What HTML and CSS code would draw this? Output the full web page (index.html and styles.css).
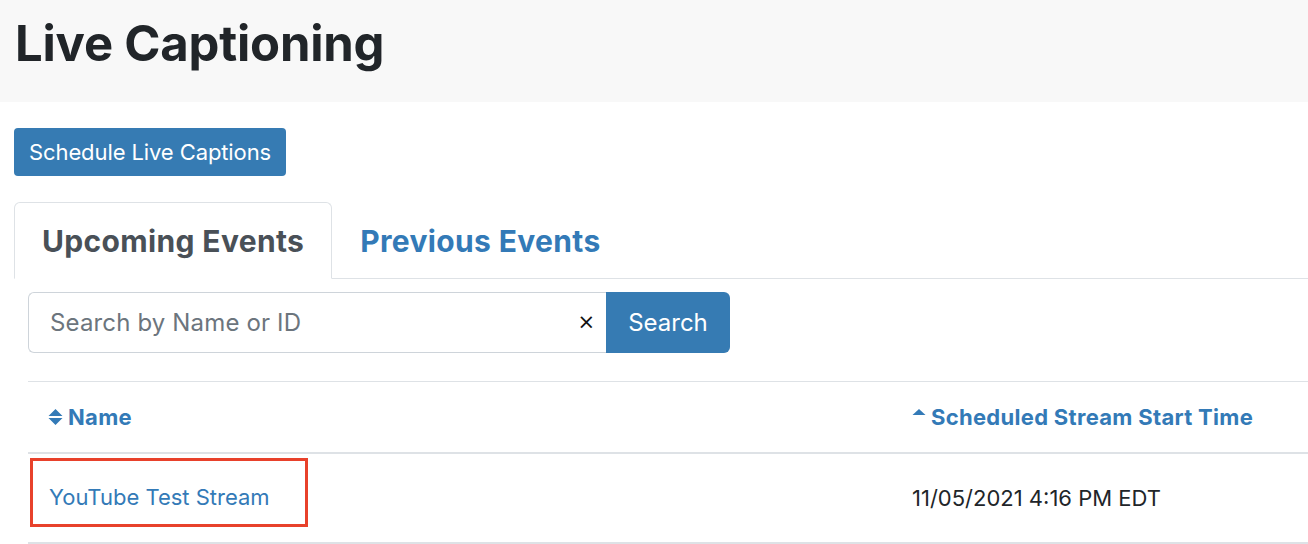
FILE: index.html
```html
<!DOCTYPE html>
<html lang="en">
<head>
<meta charset="utf-8">
<title>Live Captioning</title>
<link rel="stylesheet" href="styles.css">
</head>
<body>
<header class="page-header">
  <h1 class="page-title">Live Captioning</h1>
</header>
<main class="content">
  <button class="btn btn-schedule" type="button">Schedule Live Captions</button>
  <nav class="tabs">
    <a class="tab tab-active" href="#">Upcoming Events</a>
    <a class="tab" href="#">Previous Events</a>
  </nav>
  <section class="pane">
    <form class="search">
      <div class="search-field">
        <input class="search-input" type="text" placeholder="Search by Name or ID">
        <span class="search-clear">×</span>
      </div>
      <button class="btn btn-search" type="button">Search</button>
    </form>
    <table class="events">
      <thead>
        <tr>
          <th class="col-name">
            <a class="sort" href="#">
              <svg class="sort-icon" width="15" height="16" viewBox="0 0 15 16"><path d="M7.5 0 L14.5 7 L0.5 7 Z M0.5 9 L14.5 9 L7.5 16 Z" fill="currentColor"/></svg>
              Name
            </a>
          </th>
          <th class="col-time">
            <a class="sort" href="#">
              <svg class="sort-icon" width="14" height="16" viewBox="0 0 14 16"><path d="M7 0 L13.5 6 L0.5 6 Z" fill="currentColor"/></svg>
              Scheduled Stream Start Time
            </a>
          </th>
        </tr>
      </thead>
      <tbody>
        <tr>
          <td class="col-name"><span class="highlight"><a class="event-link" href="#">YouTube Test Stream</a></span></td>
          <td class="col-time">11/05/2021 4:16 PM EDT</td>
        </tr>
      </tbody>
    </table>
  </section>
</main>
</body>
</html>
```
FILE: styles.css
```css
* { box-sizing: border-box; }
html, body { margin: 0; padding: 0; }
body {
  font-family: Inter, "Helvetica Neue", Arial, sans-serif;
  color: #212529;
  background: #fff;
  overflow: hidden;
}
a { text-decoration: none; color: #337ab7; }

.page-header {
  background: #f8f8f8;
  height: 102px;
  padding: 14px 15px 0;
}
.page-title {
  margin: 0;
  font-size: 49px;
  line-height: 60px;
  font-weight: 700;
  color: #212529;
  letter-spacing: -0.2px;
}

.content {
  padding: 26px 0 0 14px;
}

.btn {
  font-family: inherit;
  border: 0;
  background: #367bb3;
  color: #fff;
  cursor: pointer;
}
.btn-schedule {
  display: block;
  height: 48px;
  padding: 0 15px;
  font-size: 22px;
  letter-spacing: -0.1px;
  border-radius: 4px;
}

.tabs {
  display: flex;
  margin-top: 26px;
  border-bottom: 1px solid #dee2e6;
}
.tab {
  display: block;
  height: 77px;
  padding: 0 27px;
  font-size: 30px;
  font-weight: 700;
  letter-spacing: 0.35px;
  line-height: 76px;
  border: 1px solid transparent;
  border-radius: 6px 6px 0 0;
  margin-bottom: -1px;
  color: #337ab7;
}
.tab-active {
  color: #495057;
  border-color: #dee2e6 #dee2e6 #fff;
  background: #fff;
}

.pane {
  padding: 13px 0 0 14px;
}

.search {
  display: flex;
  height: 61px;
}
.search-field {
  display: flex;
  align-items: center;
  width: 578px;
  border: 1px solid #ced4da;
  border-right: 0;
  border-radius: 6px 0 0 6px;
  padding: 0 11px 0 21px;
}
.search-input {
  flex: 1;
  border: 0;
  outline: none;
  padding: 0;
  font-family: inherit;
  font-size: 24px;
  letter-spacing: 0.15px;
  color: #495057;
  background: transparent;
}
.search-input::placeholder { color: #6c757d; }
.search-clear {
  font-size: 21px;
  line-height: 1;
  color: #111;
  font-family: "DejaVu Sans", sans-serif;
}
.btn-search {
  width: 124px;
  height: 61px;
  font-size: 24px;
  border-radius: 0 6px 6px 0;
}

.events {
  margin-top: 28px;
  width: 100%;
  border-collapse: collapse;
  font-size: 22px;
}
.events th, .events td {
  text-align: left;
  vertical-align: middle;
}
.events th {
  border-top: 1px solid #dee2e6;
  border-bottom: 2px solid #dee2e6;
  height: 71px;
  padding: 0 20px;
  font-weight: 700;
  letter-spacing: 0.3px;
  white-space: nowrap;
}
.events td {
  border-bottom: 2px solid #dee2e6;
  height: 90px;
  padding: 0 20px;
  white-space: nowrap;
}
.events .col-name { width: 864px; }
.events td.col-name { padding: 4px 0 14px 2px; vertical-align: top; }
.sort {
  display: inline-flex;
  align-items: center;
  gap: 5px;
  color: #337ab7;
}
.sort-icon { display: block; flex: none; }

.highlight {
  display: flex;
  align-items: center;
  width: 278px;
  height: 69px;
  border: 3px solid #e8412b;
  padding: 10px 0 0 16px;
}
.event-link { color: #337ab7; }
.events td.col-time { padding: 0 16px 0 20px; color: #212529; }
```
